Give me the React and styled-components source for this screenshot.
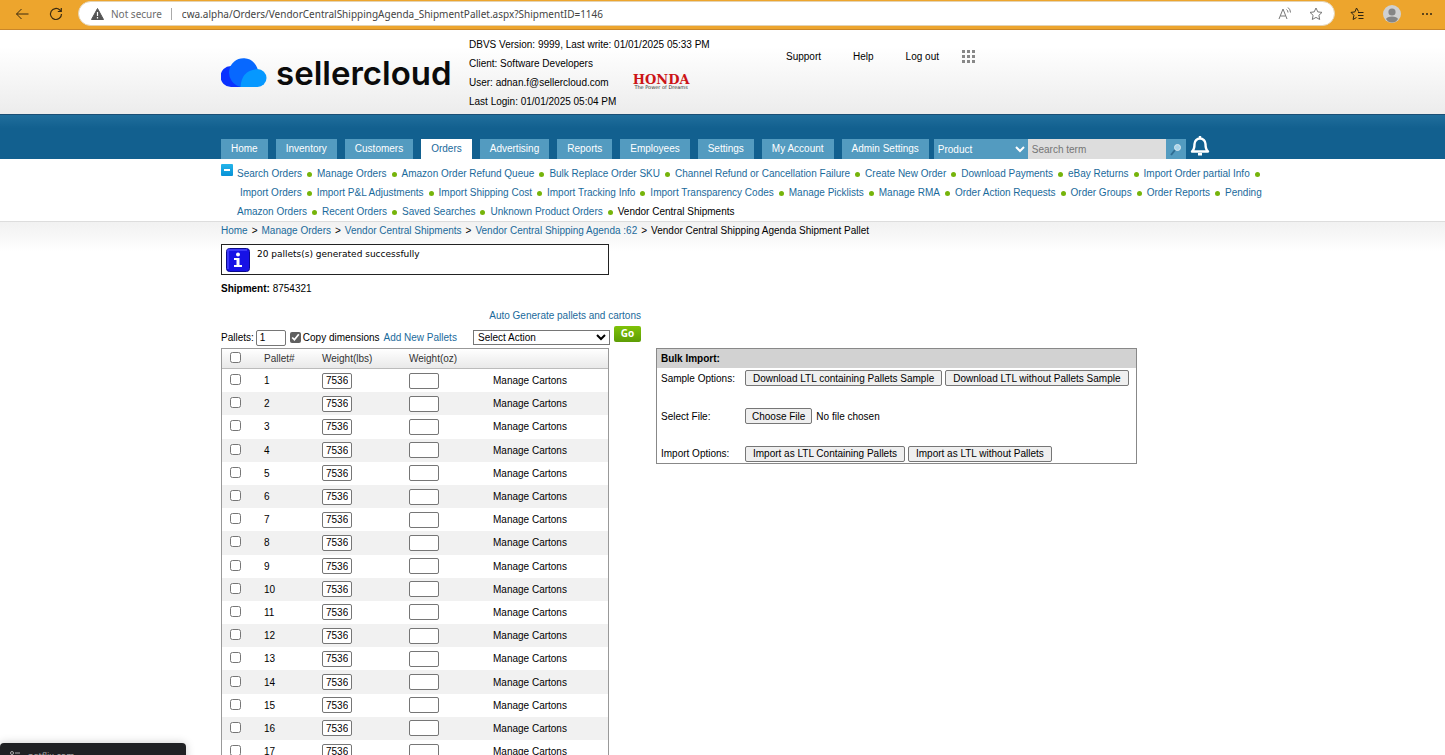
import { Fragment, useState } from 'react'
import styled, { createGlobalStyle } from 'styled-components'

const GlobalStyle = createGlobalStyle`
  * {
    box-sizing: border-box;
  }

  body {
    margin: 0;
    background: #fff;
    color: #000;
    font-family: "Liberation Sans", Arial, sans-serif;
    font-size: 10px;
  }

  input, select, button {
    font-family: inherit;
    font-size: inherit;
    color: inherit;
    margin: 0;
  }
`

const Window = styled.div`
  position: relative;
  display: flex;
  flex-direction: column;
  height: 100vh;
  overflow: hidden;
`

const BrowserBar = styled.div`
  display: flex;
  align-items: center;
  flex: none;
  height: 30px;
  padding: 0 10px 2px 14px;
  background: #eda52d;
  border-bottom: 1px solid #c9862a;
`

const BarButton = styled.button`
  display: flex;
  align-items: center;
  justify-content: center;
  width: ${({ $width }) => $width || 16}px;
  height: 18px;
  padding: 0;
  border: 0;
  background: none;
  margin-right: ${({ $gap }) => $gap || 0}px;
`

const AddressBar = styled.div`
  display: flex;
  align-items: center;
  flex: 1;
  height: 25px;
  padding: 0 10px 0 12px;
  background: #fff;
  border: 1px solid #e4d3b4;
  border-radius: 13px;
  font-family: "Noto Sans", "Open Sans", sans-serif;
`

const NotSecure = styled.span`
  margin-left: 7px;
  padding-right: 9px;
  border-right: 1px solid #aaa;
  color: #6b6b6b;
  line-height: 12px;
`

const Address = styled.input`
  flex: 1;
  margin-left: 10px;
  padding: 0;
  border: 0;
  outline: 0;
  color: #444;
`

const Page = styled.div`
  flex: 1;
  overflow-y: auto;
  scrollbar-width: none;
`

const Header = styled.header`
  height: 85px;
  padding: 4px 221px 0;
  display: flex;
  background: linear-gradient(#fff 20%, #ececec);
  border-bottom: 1px solid #1b4f75;
`

const Logo = styled.a`
  display: flex;
  align-items: center;
  width: 248px;
  height: 78px;
  color: #0b0b0b;
  text-decoration: none;
  font-family: Inter, sans-serif;
  font-size: 33px;
  font-weight: 600;

  svg {
    flex: none;
    margin-right: 9px;
  }
`

const Account = styled.div`
  width: 317px;
  padding-top: 1px;
  line-height: 19px;
`

const UserRow = styled.div`
  display: flex;
  align-items: center;
  height: 19px;
`

const Honda = styled.div`
  margin-left: 24px;
  color: #cc1417;
  font-family: "DejaVu Serif", serif;
  font-size: 13px;
  font-weight: bold;
  line-height: 9px;
  text-align: center;

  small {
    display: block;
    color: #333;
    font-family: "DejaVu Sans", sans-serif;
    font-size: 5px;
    font-weight: normal;
    line-height: 6px;
  }
`

const HeaderLinks = styled.nav`
  display: flex;
  align-items: center;
  gap: 32px;
  height: 44px;
  white-space: nowrap;

  a {
    color: #000;
    text-decoration: none;
  }
`

const AppsButton = styled.button`
  display: flex;
  margin-left: -9px;
  padding: 0;
  border: 0;
  background: none;
`

const TabBar = styled.div`
  display: flex;
  align-items: flex-end;
  height: 44px;
  padding-left: 221px;
  background: linear-gradient(#206e9c, #12608f 30%);
`

const Tabs = styled.nav`
  display: flex;
  gap: 8px;
`

const Tab = styled.a`
  padding: 0 10px;
  background: ${({ $active }) => ($active ? '#fff' : '#539bc0')};
  color: ${({ $active }) => ($active ? '#1a6a9b' : '#fff')};
  line-height: 20px;
  text-decoration: none;
  white-space: nowrap;
`

const Search = styled.form`
  display: flex;
  height: 20px;
  margin-left: 5px;

  select {
    width: 94px;
    border: 0;
    background: #539bc0;
    color: #fff;
    outline: 0;
  }

  input {
    width: 138px;
    padding: 0 4px;
    border: 0;
    background: #ddd;
  }

  button {
    display: flex;
    align-items: center;
    justify-content: center;
    width: 20px;
    padding: 0;
    border: 0;
    background: #539bc0;
  }
`

const Bell = styled.button`
  display: flex;
  padding: 0;
  margin: 0 0 3px 4px;
  border: 0;
  background: none;
`

const SubMenu = styled.div`
  display: flex;
  padding: 5px 0 0 221px;
  border-bottom: 1px solid #ddd;
`

const Collapse = styled.button`
  width: 12px;
  height: 12px;
  margin-right: 4px;
  padding: 4px 3px;
  border: 0;
  border-radius: 1px;
  background: linear-gradient(#25b5ea, #0791d6);

  &::before {
    content: "";
    display: block;
    height: 2px;
    background: #fff;
  }
`

const MenuLine = styled.div`
  display: flex;
  align-items: center;
  height: 19px;
  padding-left: ${({ $indent }) => $indent || 0}px;
  white-space: nowrap;
`

const Dot = styled.i`
  width: 5px;
  height: 5px;
  margin: 1px 5px 0;
  border-radius: 50%;
  background: #76b40b;
`

const Link = styled.a`
  color: ${({ $current }) => ($current ? '#000' : '#1a6a9b')};
  text-decoration: none;
`

const Content = styled.main`
  padding: 1px 0 0 221px;
  background: linear-gradient(#f1f1f1, #fff 30px);
`

const Crumbs = styled.nav`
  line-height: 16px;
`

const Separator = styled.span`
  margin: 0 4px;
`

const Notice = styled.div`
  display: flex;
  gap: 7px;
  width: 388px;
  height: 31px;
  margin-top: 5px;
  padding: 3px 4px;
  border: 1px solid #222;
  background: #fff;
  font-family: "DejaVu Sans", Verdana, sans-serif;
  font-size: 9px;
  line-height: 12px;
`

const Shipment = styled.p`
  margin: 6px 0 0;
  line-height: 16px;
`

const Columns = styled.div`
  display: flex;
  align-items: flex-start;
  gap: 15px;
`

const AutoRow = styled.div`
  height: 30px;
  padding-top: 11px;
  text-align: right;
  line-height: 16px;
`

const Toolbar = styled.div`
  display: flex;
  align-items: center;
  gap: 4px;
  height: 21px;

  label {
    display: flex;
    align-items: center;
    gap: 2px;
    white-space: nowrap;
  }

  select {
    width: 137px;
    height: 15px;
    margin-left: auto;
    border: 1px solid #767676;
    background: #fff;
  }
`

const Left = styled.section`
  width: 420px;
`

const Check = styled.input`
  width: 11px;
  height: 11px;
  accent-color: #5f5f5f;
`

const NumberBox = styled.input`
  display: block;
  width: 30px;
  height: 16px;
  padding: 0 3px;
  border: 1px solid #767676;
  border-radius: 2px;
  background: #fff;
`

const Go = styled.button`
  height: 16px;
  width: 27px;
  margin-bottom: 8px;
  padding: 0;
  border: 0;
  border-radius: 2px;
  background: linear-gradient(#7fc208, #5d9d05);
  color: #fff;
  font-family: "Open Sans", sans-serif;
  font-weight: bold;
  line-height: 15px;
`

const Table = styled.table`
  width: 388px;
  height: 486px;
  border: 1px solid #999;
  border-collapse: separate;
  border-spacing: 0;
  table-layout: fixed;

  th {
    height: 20px;
    padding: 0;
    border-bottom: 1px solid #bbb;
    background: linear-gradient(#fff, #e9e9e9);
    color: #333;
    font-weight: normal;
    text-align: left;
  }

  td {
    padding: 0;
  }

  tbody tr:nth-child(even) {
    background: #f1f1f1;
  }

  th:first-child, td:first-child {
    width: 42px;
    padding-left: 8px;
  }
`

const Import = styled.section`
  width: 481px;
  margin-top: 51px;
  border: 1px solid #888;

  h2 {
    margin: 0;
    padding-left: 4px;
    background: #d2d2d2;
    font-size: 10px;
    line-height: 19px;
  }
`

const ImportRow = styled.div`
  display: flex;
  align-items: center;
  height: ${({ $height }) => $height}px;
  padding-left: 4px;
  gap: 3px;

  > :first-child {
    width: 81px;
  }
`

const PlainButton = styled.button`
  height: 16px;
  padding: 0 7px;
  border: 1px solid #767676;
  border-radius: 2px;
  background: #efefef;
  white-space: nowrap;
`

const FileInput = styled.input`
  height: 16px;

  &::file-selector-button {
    height: 16px;
    margin: 0 4px 0 0;
    padding: 0 6px;
    border: 1px solid #767676;
    border-radius: 2px;
    background: #efefef;
    font: inherit;
  }
`

const Status = styled.div`
  position: absolute;
  left: 0;
  bottom: -12px;
  display: flex;
  align-items: center;
  gap: 8px;
  width: 186px;
  height: 24px;
  padding-left: 10px;
  border-radius: 4px;
  background: #202124;
  box-shadow: 0 0 10px #0003;
  color: #aaa;
  font-family: "Open Sans", sans-serif;
  font-size: 9px;
`

const tabs = ['Home', 'Inventory', 'Customers', 'Orders', 'Advertising', 'Reports', 'Employees', 'Settings', 'My Account', 'Admin Settings']

const menu = [
  ['Search Orders', 'Manage Orders', 'Amazon Order Refund Queue', 'Bulk Replace Order SKU', 'Channel Refund or Cancellation Failure', 'Create New Order', 'Download Payments', 'eBay Returns', 'Import Order partial Info'],
  ['Import Orders', 'Import P&L Adjustments', 'Import Shipping Cost', 'Import Tracking Info', 'Import Transparency Codes', 'Manage Picklists', 'Manage RMA', 'Order Action Requests', 'Order Groups', 'Order Reports', 'Pending'],
  ['Amazon Orders', 'Recent Orders', 'Saved Searches', 'Unknown Product Orders', 'Vendor Central Shipments'],
]

const crumbs = ['Home', 'Manage Orders', 'Vendor Central Shipments', 'Vendor Central Shipping Agenda :62']

const pallets = Array.from({ length: 20 }, (_, i) => i + 1)

const App = () => {
  const [checked, setChecked] = useState([])
  const toggle = (n) => setChecked(checked.includes(n) ? checked.filter((c) => c !== n) : [...checked, n])

  return (
    <>
      <GlobalStyle />
      <Window>
        <BrowserBar>
          <BarButton $gap={18} aria-label="Back">
            <svg width="14" height="12" fill="none" stroke="#3a2a10"><path d="M13.500 6H1.500M6.500 1L1.500 6l5 5" /></svg>
          </BarButton>
          <BarButton $gap={14} aria-label="Reload">
            <svg width="14" height="14" fill="none" stroke="#3a2a10" strokeWidth="1.200"><path d="M12.500 7A5.500 5.500 0 1 1 10.800 3L12 4.200M12.300 1v3.500H8.800" /></svg>
          </BarButton>
          <AddressBar>
            <svg width="13" height="12"><path d="M6.500 0.500L12.500 11.500H0.500Z" fill="#555" stroke="#555" strokeLinejoin="round" /><path d="M6.500 4v4M6.500 9v1.500" stroke="#fff" strokeWidth="1.200" /></svg>
            <NotSecure>Not secure</NotSecure>
            <Address aria-label="Address" defaultValue="cwa.alpha/Orders/VendorCentralShippingAgenda_ShipmentPallet.aspx?ShipmentID=1146" />
            <BarButton $gap={15} aria-label="Read aloud">
              <svg width="14" height="14" fill="none" stroke="#777"><path d="M1 12L5 2l4 10M2.500 9h5M8.500 2.500q1.500 1 1.500 3M10 0.500q2.500 2 2.500 5" /></svg>
            </BarButton>
            <BarButton aria-label="Add to favorites">
              <svg width="14" height="14" fill="none" stroke="#777" strokeLinejoin="round"><path d="M7 1l1.800 3.900 4.200.5-3.100 2.900.8 4.200L7 10.400l-3.700 2.100.8-4.200L1 5.400l4.200-.5z" /></svg>
            </BarButton>
          </AddressBar>
          <BarButton $width={44} aria-label="Favorites">
            <svg width="14" height="14" fill="none" stroke="#2d2413" strokeLinejoin="round"><path d="M8.500 4.500L6.500 1 4.900 4.900 1 5.400l2.900 2.900-.8 4.200 3.400-2M8 5.500h5.500M8 8.500h5.500M8.500 11.500h5" /></svg>
          </BarButton>
          <BarButton $width={26} $gap={14} aria-label="Profile">
            <svg width="18" height="18"><circle cx="9" cy="9" r="9" fill="#d0d0d0" /><circle cx="9" cy="7" r="3.600" fill="#858585" /><path d="M3 14q1-2.500 6-2.500t6 2.500q-2 3.500-6 3.500T3 14" fill="#858585" /></svg>
          </BarButton>
          <BarButton aria-label="More">
            <svg width="12" height="4" fill="#2d2413"><circle cx="2" cy="2" r="1" /><circle cx="6" cy="2" r="1" /><circle cx="10" cy="2" r="1" /></svg>
          </BarButton>
        </BrowserBar>

        <Page>
          <Header>
            <Logo href="#">
              <svg width="46" height="30">
                <path d="M10 8h12v21H10A10 10 0 0 1 10 8" fill="#0a32ff" />
                <path d="M20 29A14.500 14.500 0 1 1 37 15L30 29z" fill="#0768ff" />
                <path d="M19.500 29q1-17 17-18a9 9 0 0 1 0 18z" fill="#0698ff" />
              </svg>
              sellercloud
            </Logo>
            <Account>
              <div>DBVS Version: 9999, Last write: 01/01/2025 05:33 PM</div>
              <div>Client: Software Developers</div>
              <UserRow>
                User: adnan.f@sellercloud.com
                <Honda>HONDA<small>The Power of Dreams</small></Honda>
              </UserRow>
              <div>Last Login: 01/01/2025 05:04 PM</div>
            </Account>
            <HeaderLinks>
              <a href="#">Support</a>
              <a href="#">Help</a>
              <a href="#">Log out</a>
              <AppsButton aria-label="Apps">
                <svg width="13" height="13" fill="#888">
                  {[0, 5, 10].map((y) => [0, 5, 10].map((x) => <rect key={x + '-' + y} x={x} y={y} width="3" height="3" />))}
                </svg>
              </AppsButton>
            </HeaderLinks>
          </Header>

          <TabBar>
            <Tabs>
              {tabs.map((t) => <Tab key={t} href="#" $active={t === 'Orders'}>{t}</Tab>)}
            </Tabs>
            <Search onSubmit={(e) => e.preventDefault()}>
              <select aria-label="Search in"><option>Product</option></select>
              <input aria-label="Search term" placeholder="Search term" />
              <button aria-label="Search">
                <svg width="12" height="13"><path d="M1 12l4-5" stroke="#2f6d92" strokeWidth="2" /><circle cx="7.500" cy="4.500" r="3" fill="#a9d4ea" stroke="#d9e8f0" /></svg>
              </button>
            </Search>
            <Bell aria-label="Notifications">
              <svg width="20" height="20" fill="none" stroke="#fff" strokeWidth="2.400" strokeLinejoin="round"><path d="M2 15.500q2.500-2 2.500-7.500a5.500 5.500 0 0 1 11 0q0 5.500 2.500 7.500zM8 18.200h4M10 2V0" /></svg>
            </Bell>
          </TabBar>

          <SubMenu>
            <Collapse aria-label="Collapse menu" />
            <div>
              {menu.map((line, row) => (
                <MenuLine key={row} $indent={row === 1 ? 3 : 0}>
                  {line.map((item, i) => (
                    <Fragment key={item}>
                      <Link href="#" $current={item === 'Vendor Central Shipments'}>{item}</Link>
                      {(i < line.length - 1 || row === 0) && <Dot />}
                    </Fragment>
                  ))}
                </MenuLine>
              ))}
            </div>
          </SubMenu>

          <Content>
            <Crumbs>
              {crumbs.map((c) => <Fragment key={c}><Link href="#">{c}</Link><Separator>&gt;</Separator></Fragment>)}
              Vendor Central Shipping Agenda Shipment Pallet
            </Crumbs>
            <Notice>
              <svg width="24" height="24">
                <rect x="0.500" y="0.500" width="23" height="23" rx="3" fill="#1712e6" stroke="#0b0a8c" />
                <path d="M2 21V2h19" fill="none" stroke="#4a46ff" strokeWidth="1.500" />
                <circle cx="12" cy="6.500" r="2" fill="#fff" />
                <path d="M8 10h5.500v7H16v2H8v-2h2.500v-5H8z" fill="#fff" />
              </svg>
              <span>20 pallets(s) generated successfully</span>
            </Notice>
            <Shipment><b>Shipment:</b> 8754321</Shipment>

            <Columns>
              <Left>
                <AutoRow><Link href="#">Auto Generate pallets and cartons</Link></AutoRow>
                <Toolbar>
                  <label>Pallets:<NumberBox defaultValue="1" /></label>
                  <label><Check type="checkbox" defaultChecked />Copy dimensions</label>
                  <Link href="#">Add New Pallets</Link>
                  <select aria-label="Action"><option>Select Action</option></select>
                  <Go>Go</Go>
                </Toolbar>
                <Table>
                  <colgroup>
                    <col width="42" />
                    <col width="58" />
                    <col width="87" />
                    <col width="84" />
                    <col />
                  </colgroup>
                  <thead>
                    <tr>
                      <th><Check type="checkbox" aria-label="Select all" checked={checked.length === pallets.length} onChange={() => setChecked(checked.length === pallets.length ? [] : pallets)} /></th>
                      <th>Pallet#</th>
                      <th>Weight(lbs)</th>
                      <th>Weight(oz)</th>
                      <th />
                    </tr>
                  </thead>
                  <tbody>
                    {pallets.map((n) => (
                      <tr key={n}>
                        <td><Check type="checkbox" aria-label={'Pallet ' + n} checked={checked.includes(n)} onChange={() => toggle(n)} /></td>
                        <td>{n}</td>
                        <td><NumberBox aria-label="Weight (lbs)" defaultValue="7536" /></td>
                        <td><NumberBox aria-label="Weight (oz)" /></td>
                        <td><Link href="#" $current>Manage Cartons</Link></td>
                      </tr>
                    ))}
                  </tbody>
                </Table>
              </Left>

              <Import>
                <h2>Bulk Import:</h2>
                <ImportRow $height={20}>
                  <span>Sample Options:</span>
                  <PlainButton>Download LTL containing Pallets Sample</PlainButton>
                  <PlainButton>Download LTL without Pallets Sample</PlainButton>
                </ImportRow>
                <ImportRow $height={56}>
                  <label htmlFor="file">Select File:</label>
                  <FileInput id="file" type="file" />
                </ImportRow>
                <ImportRow $height={19}>
                  <span>Import Options:</span>
                  <PlainButton>Import as LTL Containing Pallets</PlainButton>
                  <PlainButton>Import as LTL without Pallets</PlainButton>
                </ImportRow>
              </Import>
            </Columns>
          </Content>
        </Page>

        <Status>
          <svg width="10" height="8" fill="none" stroke="#aaa"><circle cx="2" cy="2" r="1.500" /><path d="M5 2h5M0 6h5" /><circle cx="8" cy="6" r="1.500" /></svg>
          netflix.com
        </Status>
      </Window>
    </>
  )
}

export default App
